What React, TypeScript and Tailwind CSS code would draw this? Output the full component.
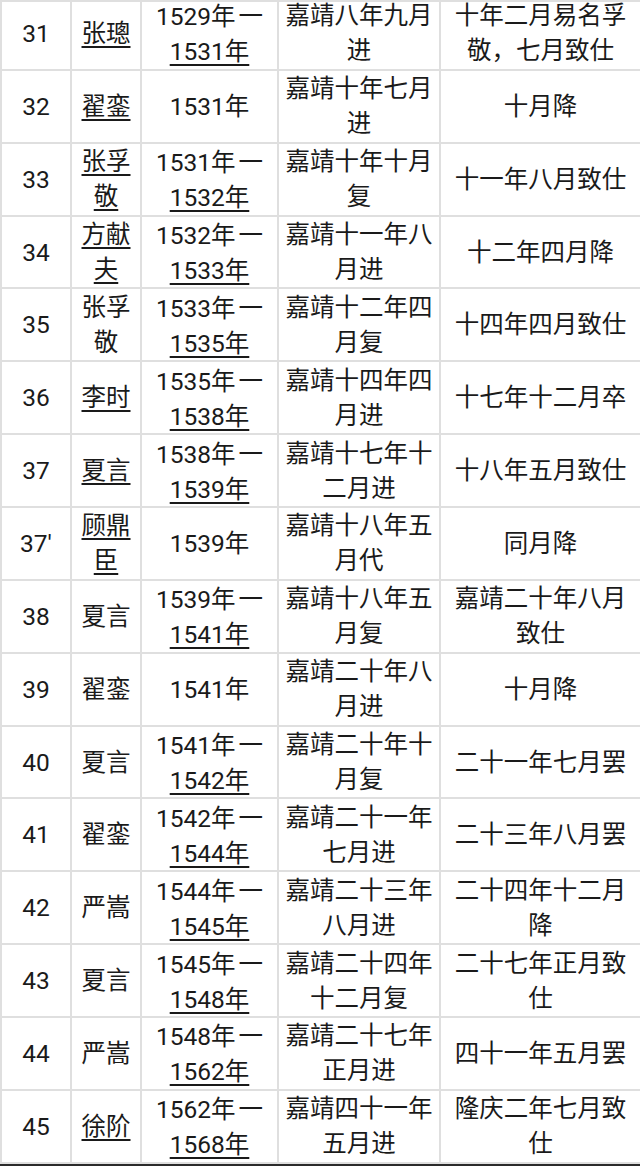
type Row = {
  no: string
  name: string
  nameLink?: boolean
  from: string
  to?: string
  date: string
  note: string
}

const rows: Row[] = [
  { no: '31', name: '张璁', nameLink: true, from: '1529年', to: '1531年', date: '嘉靖八年九月进', note: '十年二月易名孚敬，七月致仕' },
  { no: '32', name: '翟銮', nameLink: true, from: '1531年', date: '嘉靖十年七月进', note: '十月降' },
  { no: '33', name: '张孚敬', nameLink: true, from: '1531年', to: '1532年', date: '嘉靖十年十月复', note: '十一年八月致仕' },
  { no: '34', name: '方献夫', nameLink: true, from: '1532年', to: '1533年', date: '嘉靖十一年八月进', note: '十二年四月降' },
  { no: '35', name: '张孚敬', from: '1533年', to: '1535年', date: '嘉靖十二年四月复', note: '十四年四月致仕' },
  { no: '36', name: '李时', nameLink: true, from: '1535年', to: '1538年', date: '嘉靖十四年四月进', note: '十七年十二月卒' },
  { no: '37', name: '夏言', nameLink: true, from: '1538年', to: '1539年', date: '嘉靖十七年十二月进', note: '十八年五月致仕' },
  { no: "37'", name: '顾鼎臣', nameLink: true, from: '1539年', date: '嘉靖十八年五月代', note: '同月降' },
  { no: '38', name: '夏言', from: '1539年', to: '1541年', date: '嘉靖十八年五月复', note: '嘉靖二十年八月致仕' },
  { no: '39', name: '翟銮', from: '1541年', date: '嘉靖二十年八月进', note: '十月降' },
  { no: '40', name: '夏言', from: '1541年', to: '1542年', date: '嘉靖二十年十月复', note: '二十一年七月罢' },
  { no: '41', name: '翟銮', from: '1542年', to: '1544年', date: '嘉靖二十一年七月进', note: '二十三年八月罢' },
  { no: '42', name: '严嵩', from: '1544年', to: '1545年', date: '嘉靖二十三年八月进', note: '二十四年十二月降' },
  { no: '43', name: '夏言', from: '1545年', to: '1548年', date: '嘉靖二十四年十二月复', note: '二十七年正月致仕' },
  { no: '44', name: '严嵩', from: '1548年', to: '1562年', date: '嘉靖二十七年正月进', note: '四十一年五月罢' },
  { no: '45', name: '徐阶', nameLink: true, from: '1562年', to: '1568年', date: '嘉靖四十一年五月进', note: '隆庆二年七月致仕' },
]

const cell = 'bg-white flex items-center justify-center text-center leading-[35px] px-1'
const link = 'underline decoration-[2px] underline-offset-[4px]'

export default function App() {
  return (
    <div
      className="w-[640px] h-[1166px] overflow-hidden flex flex-col bg-white text-[#1a1a1a] text-[24.5px]"
      style={{ fontFamily: 'Roboto, "Noto Sans CJK SC", sans-serif' }}
    >
      <div className="border-t-2 border-[#dfdfdf] overflow-hidden">
        <div className="-mt-[6px] w-[642px] grid grid-cols-[68px_68px_135px_160px_199px] auto-rows-[70.86px] gap-[2px] p-[2px] bg-[#dfdfdf]">
          {rows.map((r) => (
            <div key={r.no} className="contents">
              <div className={cell}>{r.no}</div>
              <div className={cell}>
                <span className={r.nameLink ? link : ''}>{r.name}</span>
              </div>
              <div className={cell}>
                <span>
                  {r.from}
                  {r.to && (
                    <>
                      <span className="pl-[3px]" style={{ fontFamily: '"Noto Sans CJK SC", sans-serif' }}>一</span>
                      {' '}
                      <span className={link}>{r.to}</span>
                    </>
                  )}
                </span>
              </div>
              <div className={cell}>{r.date}</div>
              <div className={cell}>{r.note}</div>
            </div>
          ))}
        </div>
      </div>
      <div className="flex-1 bg-[#2b2b2b]" />
    </div>
  )
}
